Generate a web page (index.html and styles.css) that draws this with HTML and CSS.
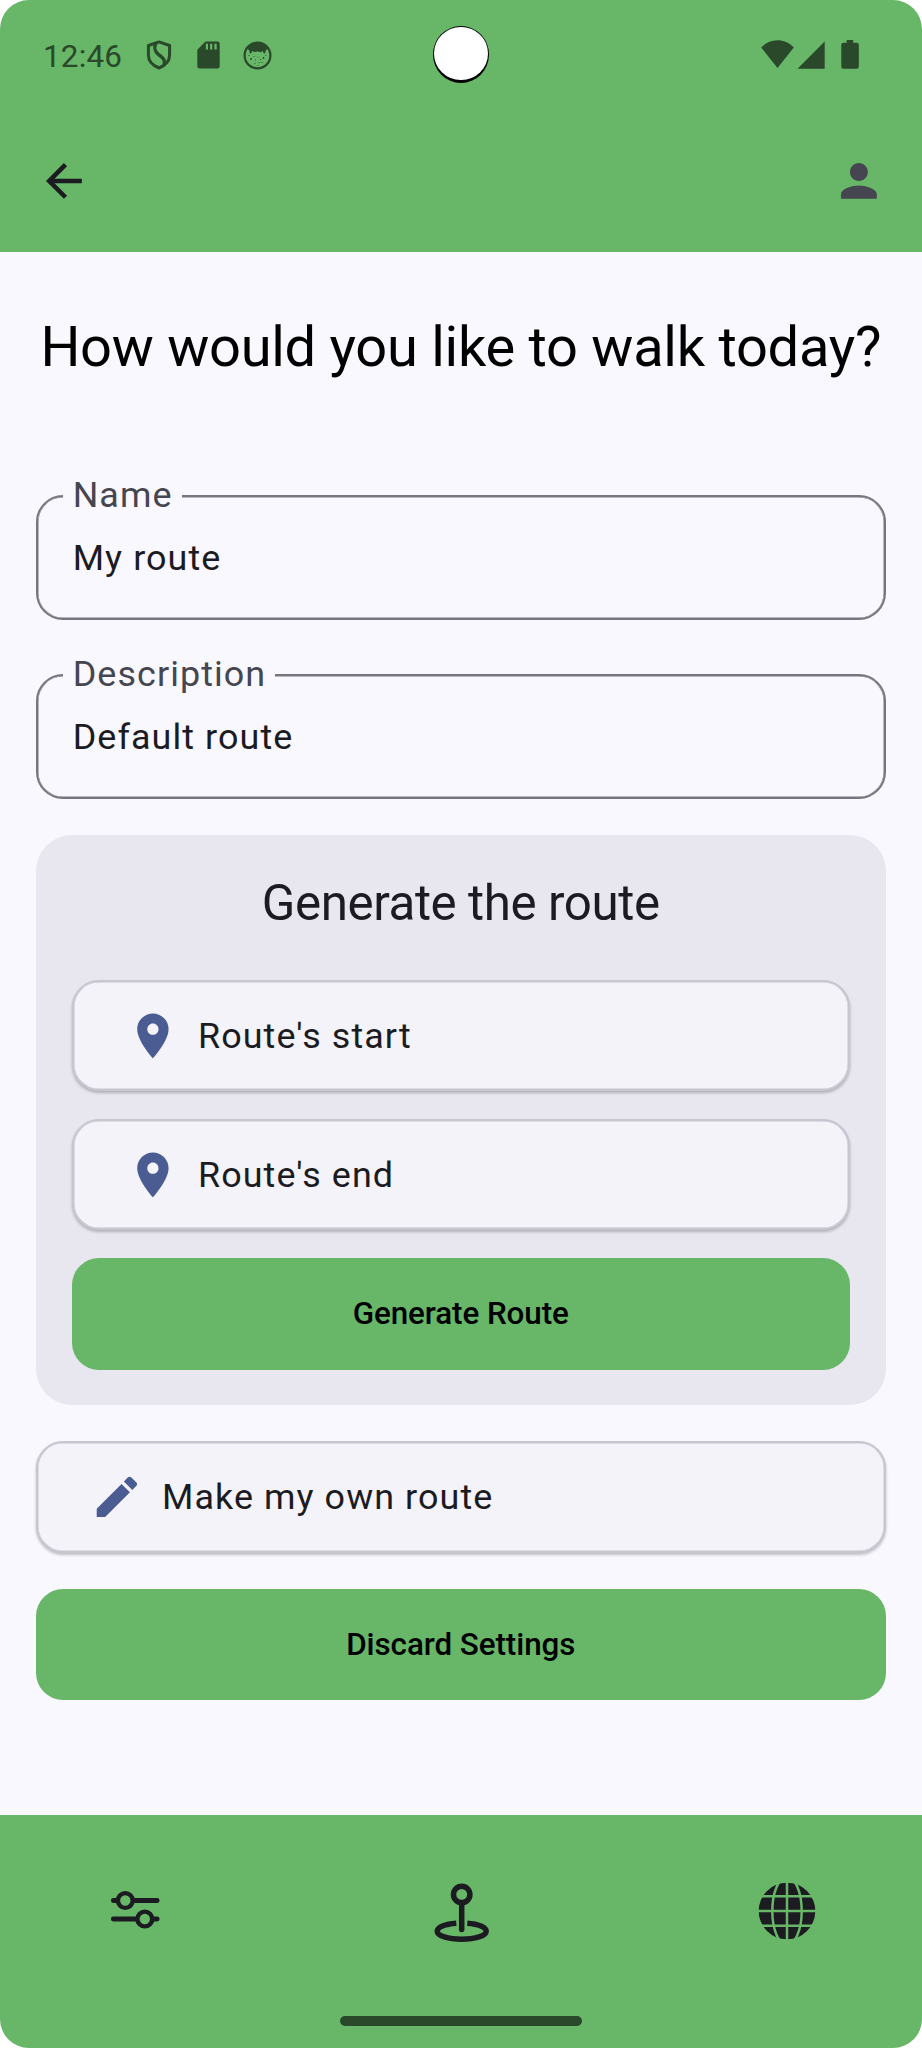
FILE: index.html
```html
<!DOCTYPE html>
<html lang="en">
<head>
<meta charset="utf-8">
<title>Route settings</title>
<link rel="stylesheet" href="styles.css">
</head>
<body>
<div class="screen">
  <header class="header">
    <div class="status">
      <span class="clock">12:46</span>
      <svg class="s-shield" width="26" height="30" viewBox="0 0 26 30" fill="none" stroke="#2a482a"><path stroke-width="3" stroke-linejoin="round" d="M13 1.900 23.600 5.500v9.500C23.600 21 19 25.600 13 28 7 25.600 2.400 21 2.400 15V5.500Z"/><path stroke-width="3.400" d="M10 3C7.500 8 8.500 11 12.500 14.500 17.500 18.500 19.500 20 18 25"/></svg>
      <svg class="s-card" width="23" height="28" viewBox="0 0 23 28"><path fill="#2a482a" fill-rule="evenodd" d="M8.500.5h12a2.200 2.200 0 0 1 2.200 2.200v22.600a2.200 2.200 0 0 1-2.200 2.200h-18A2.200 2.200 0 0 1 .3 25.300V8.700ZM8.800 2.800v5.700H11V2.800Zm4.300 0v5.700h2.200V2.800Zm4.300 0v5.700h2.300V2.800Z"/></svg>
      <svg class="s-face" width="29" height="29" viewBox="0 0 29 29" fill="#2a482a"><circle cx="14.500" cy="14.500" r="12.900" fill="none" stroke="#2a482a" stroke-width="2.200"/><path d="M4.500 8C7 3 11 1 14.500 1S22 3 24.800 8L22.800 9.200l-.8 3.600-1.600-1-.7-2-1.700 1.400c-2-1-5-1-7 0L9.300 9.800l-.7 2-1.600 1-.8-3.600Z"/><g><circle cx="8" cy="18" r=".9"/><circle cx="11" cy="15.500" r=".6"/><circle cx="12.500" cy="19" r=".6"/><circle cx="15" cy="16" r=".5"/><circle cx="17.500" cy="18.500" r=".6"/><circle cx="20.500" cy="17" r=".9"/><circle cx="22.800" cy="14.500" r=".6"/><circle cx="12" cy="22.500" r=".6"/><circle cx="16" cy="21.500" r=".6"/><circle cx="19" cy="21.500" r=".6"/><circle cx="6" cy="14.500" r=".6"/><circle cx="15" cy="24.500" r=".5"/></g></svg>
      <span class="camera"><span class="lens"></span></span>
      <svg class="s-wifi" width="33" height="28" viewBox="0 0 33 28"><path fill="#2a482a" d="M.2 7.500C5 2.500 10.500.2 16.500.2S28 2.500 32.800 7.500L16.500 28Z"/></svg>
      <svg class="s-signal" width="28" height="28" viewBox="0 0 28 28"><path fill="#2a482a" d="M.5 27.700 27.700.5v27.200Z"/></svg>
      <svg class="s-battery" width="18" height="29" viewBox="0 0 18 29"><path fill="#2a482a" d="M5.700 0h6.500v2.800h3.600A2 2 0 0 1 17.800 4.800v22a2 2 0 0 1-2 2H2.300a2 2 0 0 1-2-2v-22a2 2 0 0 1 2-2h3.400Z"/></svg>
    </div>
    <div class="appbar">
      <svg class="icon" viewBox="0 0 24 24" fill="#1b1b21"><path d="M20 11H7.830l5.590-5.590L12 4l-8 8 8 8 1.410-1.410L7.830 13H20v-2z"/></svg>
      <svg class="icon" viewBox="0 0 24 24" fill="#45464f"><path d="M12 12c2.210 0 4-1.790 4-4s-1.790-4-4-4-4 1.790-4 4 1.790 4 4 4zm0 2c-2.670 0-8 1.340-8 4v2h16v-2c0-2.660-5.330-4-8-4z"/></svg>
    </div>
  </header>

  <main class="content">
    <h1 class="title">How would you like to walk today?</h1>
    <div class="field"><label class="label">Name</label><span class="value">My route</span></div>
    <div class="field"><label class="label">Description</label><span class="value">Default route</span></div>

    <section class="card">
      <h2 class="card-title">Generate the route</h2>
      <div class="option inset">
        <svg class="icon" viewBox="0 0 24 24" fill="#4a5c92"><path d="M12 2C8.130 2 5 5.130 5 9c0 5.250 7 13 7 13s7-7.750 7-13c0-3.870-3.130-7-7-7zm0 9.500c-1.380 0-2.500-1.120-2.500-2.500s1.120-2.500 2.500-2.500 2.500 1.120 2.500 2.500-1.120 2.500-2.500 2.500z"/></svg>
        <span>Route's start</span>
      </div>
      <div class="option inset">
        <svg class="icon" viewBox="0 0 24 24" fill="#4a5c92"><path d="M12 2C8.130 2 5 5.130 5 9c0 5.250 7 13 7 13s7-7.750 7-13c0-3.870-3.130-7-7-7zm0 9.500c-1.380 0-2.500-1.120-2.500-2.500s1.120-2.500 2.500-2.500 2.500 1.120 2.500 2.500-1.120 2.500-2.500 2.500z"/></svg>
        <span>Route's end</span>
      </div>
      <button class="action">Generate Route</button>
    </section>

    <div class="option own">
      <svg class="icon" viewBox="0 0 24 24" fill="#4a5c92"><path d="M3 17.250V21h3.750L17.810 9.940l-3.750-3.750L3 17.250zM20.710 7.040c.39-.39.39-1.020 0-1.410l-2.340-2.340c-.39-.39-1.020-.39-1.410 0l-1.830 1.830 3.750 3.750 1.830-1.830z"/></svg>
      <span>Make my own route</span>
    </div>
    <button class="action discard">Discard Settings</button>
  </main>

  <nav class="nav">
    <div class="tabs">
      <svg class="t-sliders" width="50" height="40" viewBox="110 1890 50 40" fill="none" stroke="#1b1b21" stroke-linecap="round"><path stroke-width="4.800" d="M113.300 1900.500H117M134 1900.500h23.200M113.300 1919H136M153 1919h4.200"/><circle cx="125.300" cy="1900.500" r="7.400" stroke-width="4.400"/><circle cx="144.800" cy="1919" r="7.400" stroke-width="4.400"/></svg>
      <svg class="t-walk" width="58" height="62" viewBox="433 1882 58 62" fill="none" stroke="#1b1b21" stroke-width="5.500"><circle cx="461.700" cy="1894.400" r="8.200"/><path stroke-linecap="round" d="M461.700 1904v25.500"/><path d="M456.300 1923.300C445 1924 437.200 1927.300 437.200 1931.300c0 4.500 11 8 24.500 8s24.500-3.500 24.500-8c0-4-7.800-7.300-18.900-8"/></svg>
      <svg class="t-globe" width="58" height="58" viewBox="-29 -29 58 58"><circle r="28.300" fill="#1b1b21"/><g fill="none" stroke="#68b668" stroke-width="2.500"><path d="M-29 0H29M-29-14.700H29M-29 14.700H29M0-29V29"/><ellipse rx="14.700" ry="34"/></g></svg>
    </div>
    <div class="home"></div>
  </nav>
</div>
</body>
</html>
```
FILE: styles.css
```css
* { box-sizing: border-box; }
body { margin: 0; background: #fff; font-family: Roboto, "Liberation Sans", sans-serif; }
.screen { width: 921.5px; height: 2048px; border-radius: 29px; overflow: hidden; background: #faf8ff; display: flex; flex-direction: column; }
svg { display: block; flex: none; }
.icon { width: 53.8px; height: 53.8px; }

.header { height: 252.4px; background: #68b668; flex: none; }
.status { height: 110px; display: flex; align-items: center; position: relative; padding-left: 43px; }
.clock { font-size: 31.4px; line-height: 37px; letter-spacing: .2px; color: #2a482a; width: 103px; margin-top: 3px; }
.s-card { margin-left: 25px; }
.s-face { margin-left: 23px; }
.s-wifi { margin-left: auto; margin-bottom: 2px; }
.s-signal { margin-left: 3px; margin-bottom: 1px; }
.s-battery { margin: 0 63px 1px 16px; }
.camera { position: absolute; left: 433px; top: 26px; width: 56px; height: 57px; border-radius: 50%; background: #000; }
.lens { display: block; width: 54px; height: 53.500px; margin: .8px 1px; border-radius: 50%; background: #fff; }
.appbar { display: flex; justify-content: space-between; padding: 44.4px 36px 0 37px; }

.content { flex: 1; padding: 0 36px; display: flex; flex-direction: column; }
.title { margin: 61.600px -20px 0; font-size: 56px; line-height: 66px; font-weight: 400; letter-spacing: -.27px; text-align: center; color: #000; white-space: nowrap; }
.field { position: relative; flex: none; height: 125.500px; border: 2px solid #777680; box-shadow: inset 0 0 0 .5px #777680; border-radius: 27px; padding: 37px 0 0 34.700px; }
.title + .field { margin-top: 114.900px; }
.field + .field { margin-top: 53.300px; }
.label, .value, .option { font-size: 35.900px; line-height: 48px; letter-spacing: 1.080px; white-space: nowrap; color: #1b1b21; }
.label { position: absolute; left: 25px; top: -26px; padding: 0 9px 0 9.700px; background: #faf8ff; color: #45464f; }
.value { display: block; }

.card { margin-top: 36px; height: 569.700px; flex: none; border-radius: 36px; background: #e8e6ef; padding: 0 36px; display: flex; flex-direction: column; }
.card-title { margin: 39px 0 47px; font-size: 49.300px; line-height: 59px; font-weight: 400; letter-spacing: -.43px; text-align: center; color: #1b1b21; }
.option { height: 111.200px; flex: none; display: flex; align-items: center; border: 2px solid #c6c5d0; border-radius: 27px; background: #f4f3fa; box-shadow: inset 0 0 0 .5px #c6c5d0, 0 2px 3px rgba(0,0,0,.24); }
.inset { margin-bottom: 27.800px; padding-left: 51.500px; gap: 18.700px; }
.own { height: 112px; margin-top: 36px; padding-left: 51.500px; gap: 18.700px; }
.action { border: 0; padding: 0; width: 100%; height: 111.500px; flex: none; border-radius: 27px; background: #68b668; color: #000; font: 500 31.400px/45px Roboto, "Liberation Sans", sans-serif; letter-spacing: -.08px; }
.discard { margin-top: 36px; }

.nav { height: 233px; flex: none; background: #68b668; display: flex; flex-direction: column; align-items: center; }
.tabs { width: 100%; height: 201px; flex: none; display: flex; justify-content: space-between; align-items: flex-start; padding: 67px 106px 0 110px; }
.t-sliders { margin-top: 8px; }
.t-walk { margin-left: 5.500px; }
.home { width: 242.500px; height: 9.600px; border-radius: 5px; background: #2a482a; }
```
